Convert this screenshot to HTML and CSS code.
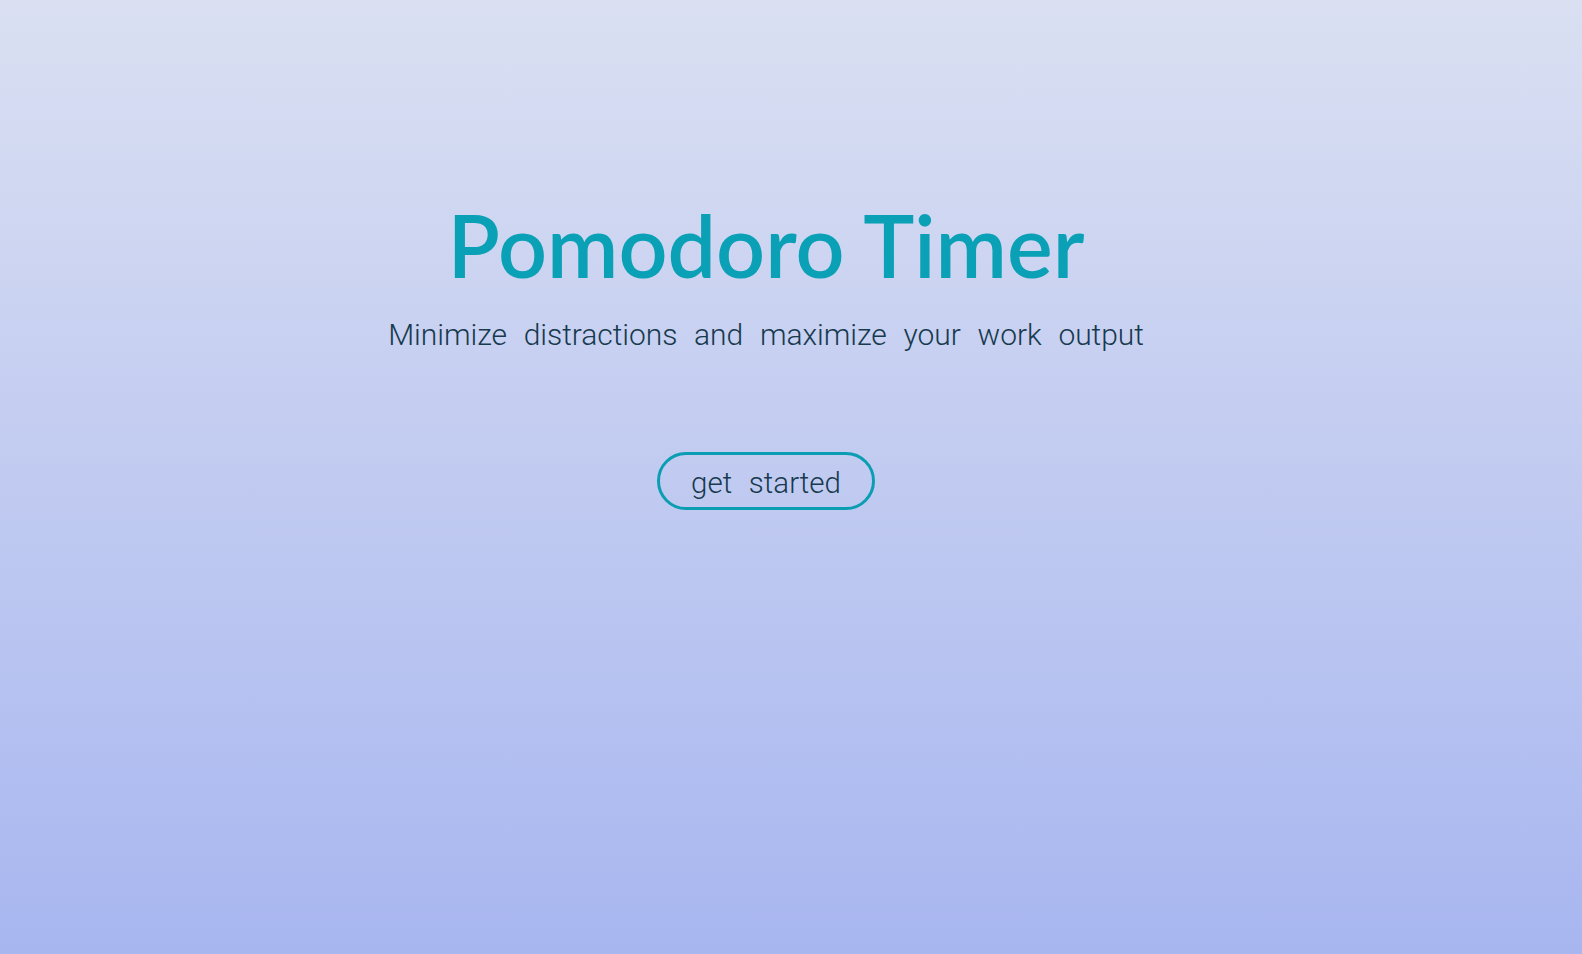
FILE: index.html
```html
<!DOCTYPE html>
<html lang="en">
<head>
<meta charset="utf-8">
<title>Pomodoro Timer</title>
<link rel="stylesheet" href="styles.css">
</head>
<body>
<main class="hero">
  <h1 class="title">Pomodoro Timer</h1>
  <p class="subtitle">Minimize distractions and maximize your work output</p>
  <button class="start-btn">get started</button>
</main>
</body>
</html>
```
FILE: styles.css
```css
html, body {
  margin: 0;
  padding: 0;
  height: 100%;
}
body {
  background: linear-gradient(to bottom, #dae0f2 0%, #a8b6f0 100%);
  min-height: 954px;
}
.hero {
  display: flex;
  flex-direction: column;
  align-items: center;
  padding-top: 195px;
  padding-right: 50px;
}
.title {
  margin: 0;
  font-family: "Lato", "Noto Sans", sans-serif;
  font-weight: 600;
  font-size: 86px;
  line-height: 100px;
  color: #0aa0b5;
}
.subtitle {
  margin: 20px 0 0;
  font-family: "Roboto", "Liberation Sans", sans-serif;
  font-weight: 300;
  font-size: 30px;
  line-height: 40px;
  color: #173a4e;
  word-spacing: 9.5px;
  letter-spacing: -0.05px;
}
.start-btn {
  margin-top: 97px;
  width: 218px;
  height: 58px;
  border: 3px solid #0b9db2;
  border-radius: 29px;
  background: transparent;
  font-family: "Roboto", "Liberation Sans", sans-serif;
  font-weight: 300;
  font-size: 29.5px;
  color: #173a4e;
  word-spacing: 9.5px;
  padding: 3px 0 0;
  cursor: pointer;
}
```
